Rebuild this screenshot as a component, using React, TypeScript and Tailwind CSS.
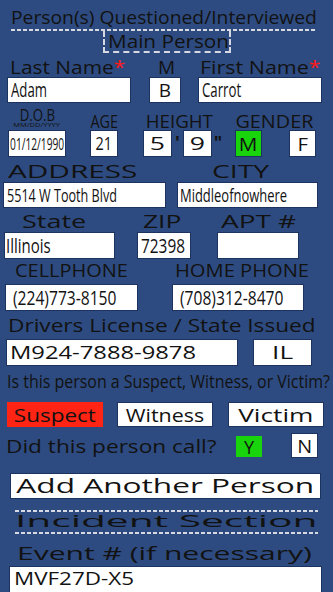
import type { ReactNode } from "react";

type Props = { className?: string; children?: ReactNode };

// stretched / condensed text, like the Android form it comes from
function Sx({ className = "", children }: Props) {
  return <span className={`block w-max whitespace-nowrap leading-none ${className}`}>{children}</span>;
}

function Field({ className = "", children }: Props) {
  return <div className={`flex shrink-0 items-center border border-[#1c335f] ${className}`}>{children}</div>;
}

function Dash({ className = "" }: Props) {
  return (
    <div
      className={`h-[2px] bg-[repeating-linear-gradient(90deg,#d6d9e2_0px,#d6d9e2_4px,transparent_4px,transparent_6px)] ${className}`}
    />
  );
}

export default function App() {
  return (
    <div className="h-[592px] w-[333px] overflow-hidden bg-[#2d4b80] font-['Open_Sans',sans-serif] text-[#121212]">
      {/* header */}
      <div className="ml-[11px] h-[29px] w-[306px] pt-[8px]">
        <Sx className="origin-left scale-x-[1.015] text-[19px]">Person(s) Questioned/Interviewed</Sx>
      </div>
      <Dash className="ml-[11px] w-[306px]" />
      <div className="ml-[103px] h-[22px] w-[128px] border-2 border-t-0 border-dashed border-[#d6d9e2] pl-[3px] pt-[1px]">
        <Sx className="origin-left scale-x-[1.09] text-[19px]">Main Person</Sx>
      </div>

      {/* names */}
      <div className="flex h-[24px] pt-[5px] text-[19px]">
        <div className="ml-[10px] w-[140px] shrink-0">
          <Sx className="origin-left scale-x-[1.1]">
            Last Name<span className="text-[#ff1a1a]">*</span>
          </Sx>
        </div>
        <div className="ml-[8px] w-[20px] shrink-0">
          <Sx>M</Sx>
        </div>
        <div className="ml-[22px] w-[124px] shrink-0">
          <Sx className="origin-left scale-x-[1.13]">
            First Name<span className="text-[#ff1a1a]">*</span>
          </Sx>
        </div>
      </div>
      <div className="flex h-[26px]">
        <Field className="ml-[7px] h-[26px] w-[124px] bg-white pl-[3px]">
          <Sx className="origin-left scale-x-[0.66] text-[20px]">Adam</Sx>
        </Field>
        <Field className="ml-[18px] h-[26px] w-[32px] justify-center bg-white">
          <Sx className="text-[19px]">B</Sx>
        </Field>
        <Field className="ml-[17px] h-[26px] w-[124px] bg-white pl-[3px]">
          <Sx className="origin-left scale-x-[0.66] text-[20px]">Carrot</Sx>
        </Field>
      </div>

      {/* dob / age / height / gender */}
      <div className="flex h-[27px]">
        <div className="ml-[12px] flex w-[50px] shrink-0 flex-col items-center pt-[4px]">
          <Sx className="scale-x-[0.83] text-[16px]">D.O.B</Sx>
          <Sx className="mt-[-1px] scale-x-[1.25] text-[6px]">MM/DD/YYYY</Sx>
        </div>
        <div className="ml-[28px] flex w-[28px] shrink-0 justify-center pt-[9px]">
          <Sx className="scale-x-[0.8] text-[18px]">AGE</Sx>
        </div>
        <div className="ml-[27px] flex w-[68px] shrink-0 justify-center pt-[9px]">
          <Sx className="scale-x-[1.04] text-[18px]">HEIGHT</Sx>
        </div>
        <div className="ml-[22px] flex w-[78px] shrink-0 justify-center pt-[9px]">
          <Sx className="scale-x-[1.1] text-[18px]">GENDER</Sx>
        </div>
      </div>
      <div className="flex h-[27px]">
        <Field className="ml-[8px] h-[27px] w-[58px] justify-center bg-white">
          <Sx className="scale-x-[0.6] text-[17px]">01/12/1990</Sx>
        </Field>
        <Field className="ml-[24px] h-[27px] w-[28px] justify-center bg-white">
          <Sx className="scale-x-[0.76] text-[19px]">21</Sx>
        </Field>
        <Field className="ml-[25px] h-[27px] w-[29px] justify-center bg-white">
          <Sx className="scale-x-[1.4] text-[19px]">5</Sx>
        </Field>
        <div className="flex w-[11px] shrink-0 justify-center pt-[3px]">
          <Sx className="text-[18px] font-bold">'</Sx>
        </div>
        <Field className="h-[27px] w-[29px] justify-center bg-white">
          <Sx className="scale-x-[1.4] text-[19px]">9</Sx>
        </Field>
        <div className="flex w-[12px] shrink-0 justify-center pt-[3px]">
          <Sx className="text-[18px] font-bold">"</Sx>
        </div>
        <Field className="ml-[11px] h-[27px] w-[27px] justify-center bg-[#19d40c]">
          <Sx className="scale-x-[1.15] text-[18px]">M</Sx>
        </Field>
        <Field className="ml-[27px] h-[27px] w-[27px] justify-center bg-white">
          <Sx className="scale-x-[1.13] text-[18px]">F</Sx>
        </Field>
      </div>

      {/* address */}
      <div className="flex h-[25px] pt-[5px] text-[18px]">
        <div className="ml-[8px] w-[129px] shrink-0">
          <Sx className="origin-left scale-x-[1.65]">ADDRESS</Sx>
        </div>
        <div className="ml-[75px] w-[58px] shrink-0">
          <Sx className="origin-left scale-x-[1.57]">CITY</Sx>
        </div>
      </div>
      <div className="flex h-[26px]">
        <Field className="ml-[3px] h-[26px] w-[163px] bg-white pl-[3px]">
          <Sx className="origin-left scale-x-[0.7] text-[18px]">5514 W Tooth Blvd</Sx>
        </Field>
        <Field className="ml-[11px] h-[26px] w-[141px] bg-white pl-[2px]">
          <Sx className="origin-left scale-x-[0.72] text-[18px]">Middleofnowhere</Sx>
        </Field>
      </div>

      {/* state / zip / apt */}
      <div className="flex h-[24px] pt-[4px] text-[19px]">
        <div className="ml-[22px] w-[63px] shrink-0">
          <Sx className="origin-left scale-x-[1.42]">State</Sx>
        </div>
        <div className="ml-[58px] w-[40px] shrink-0">
          <Sx className="origin-left scale-x-[1.39]">ZIP</Sx>
        </div>
        <div className="ml-[38px] w-[75px] shrink-0">
          <Sx className="origin-left scale-x-[1.47]">APT #</Sx>
        </div>
      </div>
      <div className="flex h-[27px]">
        <Field className="ml-[4px] h-[27px] w-[111px] bg-white pl-[1px]">
          <Sx className="origin-left scale-x-[0.75] text-[20px]">Illinois</Sx>
        </Field>
        <Field className="ml-[22px] h-[27px] w-[54px] bg-white pl-[3px]">
          <Sx className="origin-left scale-x-[0.77] text-[20px]">72398</Sx>
        </Field>
        <Field className="ml-[26px] h-[27px] w-[82px] bg-white" />
      </div>

      {/* phones */}
      <div className="flex h-[24px] pt-[2px] text-[19px]">
        <div className="ml-[15px] w-[112px] shrink-0">
          <Sx className="origin-left scale-x-[1.05]">CELLPHONE</Sx>
        </div>
        <div className="ml-[48px] w-[127px] shrink-0">
          <Sx className="origin-left scale-x-[1.06]">HOME PHONE</Sx>
        </div>
      </div>
      <div className="flex h-[28px] pt-[1px]">
        <Field className="ml-[5px] h-[27px] w-[133px] bg-white pl-[7px]">
          <Sx className="origin-left scale-x-[0.78] text-[20px]">(224)773-8150</Sx>
        </Field>
        <Field className="ml-[34px] h-[27px] w-[132px] bg-white pl-[7px]">
          <Sx className="origin-left scale-x-[0.78] text-[20px]">(708)312-8470</Sx>
        </Field>
      </div>

      {/* license */}
      <div className="h-[28px] pl-[8px] pt-[5px]">
        <Sx className="origin-left scale-x-[1.19] text-[19px]">Drivers License / State Issued</Sx>
      </div>
      <div className="flex h-[27px]">
        <Field className="ml-[6px] h-[27px] w-[232px] bg-white pl-[3px]">
          <Sx className="origin-left scale-x-[1.25] text-[19px]">M924-7888-9878</Sx>
        </Field>
        <Field className="ml-[15px] h-[27px] w-[59px] justify-center bg-white">
          <Sx className="scale-x-[1.38] text-[19px]">IL</Sx>
        </Field>
      </div>

      {/* role */}
      <div className="h-[34px] pl-[7px] pt-[6px]">
        <Sx className="origin-left scale-x-[0.84] text-[19px]">Is this person a Suspect, Witness, or Victim?</Sx>
      </div>
      <div className="flex h-[30px] pt-[2px]">
        <Field className="ml-[7px] h-[25px] w-[96px] justify-center border-[#ff2414] bg-[#ff2414]">
          <Sx className="scale-x-[1.25] text-[18px]">Suspect</Sx>
        </Field>
        <Field className="ml-[14px] h-[25px] w-[96px] justify-center bg-white">
          <Sx className="scale-x-[1.19] text-[18px]">Witness</Sx>
        </Field>
        <Field className="ml-[15px] h-[25px] w-[96px] justify-center bg-white">
          <Sx className="scale-x-[1.46] text-[18px]">Victim</Sx>
        </Field>
      </div>

      {/* called */}
      <div className="flex h-[32px] items-start">
        <div className="ml-[6px] w-[211px] shrink-0 pt-[7px]">
          <Sx className="origin-left scale-x-[1.19] text-[19px]">Did this person call?</Sx>
        </div>
        <Field className="ml-[19px] mt-[6px] h-[21px] w-[26px] justify-center border-[#19d40c] bg-[#19d40c]">
          <Sx className="text-[18px]">Y</Sx>
        </Field>
        <Field className="ml-[29px] mt-[3px] h-[25px] w-[27px] justify-center bg-white">
          <Sx className="scale-x-[1.1] text-[18px]">N</Sx>
        </Field>
      </div>

      <div className="h-[38px] pt-[11px]">
        <Field className="ml-[10px] h-[26px] w-[311px] justify-center bg-white">
          <Sx className="scale-x-[1.58] text-[20px]">Add Another Person</Sx>
        </Field>
      </div>

      {/* incident */}
      <Dash className="ml-[15px] mt-[10px] w-[303px]" />
      <div className="h-[20px] pl-[15px] pt-[1px]">
        <Sx className="origin-left scale-x-[2.54] text-[16px]">Incident Section</Sx>
      </div>
      <Dash className="ml-[15px] w-[303px]" />

      <div className="h-[32px] pl-[17px] pt-[10px]">
        <Sx className="origin-left scale-x-[1.58] text-[19px]">Event # (if necessary)</Sx>
      </div>
      <Field className="ml-[9px] h-[30px] w-[313px] items-start bg-white pl-[4px] pt-[2px]">
        <Sx className="origin-left scale-x-[1.18] text-[19px]">MVF27D-X5</Sx>
      </Field>
    </div>
  );
}
